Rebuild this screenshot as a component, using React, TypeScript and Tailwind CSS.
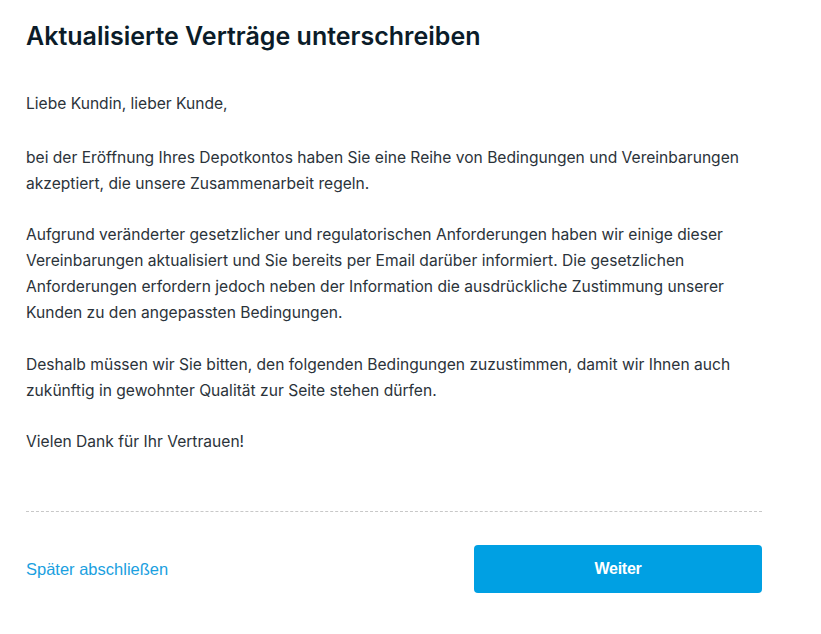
export default function App() {
  return (
    <div className="min-h-screen bg-white font-['Inter',sans-serif]">
      <div className="w-[736px] ml-[26px] pt-[20px]">
        <h1 className="text-[25px] leading-[32px] font-semibold text-[#0b1c29]">Aktualisierte Verträge unterschreiben</h1>
        <div className="mt-[39px] text-[15.6px] leading-[26px] text-[#2b333a]">
          <p>Liebe Kundin, lieber Kunde,</p>
          <p className="mt-[28px]">bei der Eröffnung Ihres Depotkontos haben Sie eine Reihe von Bedingungen und Vereinbarungen akzeptiert, die unsere Zusammenarbeit regeln.</p>
          <p className="mt-[25px]">Aufgrund veränderter gesetzlicher und regulatorischen Anforderungen haben wir einige dieser Vereinbarungen aktualisiert und Sie bereits per Email darüber informiert. Die gesetzlichen Anforderungen erfordern jedoch neben der Information die ausdrückliche Zustimmung unserer Kunden zu den angepassten Bedingungen.</p>
          <p className="mt-[26px]">Deshalb müssen wir Sie bitten, den folgenden Bedingungen zuzustimmen, damit wir Ihnen auch zukünftig in gewohnter Qualität zur Seite stehen dürfen.</p>
          <p className="mt-[25px]">Vielen Dank für Ihr Vertrauen!</p>
        </div>
        <div className="mt-[56px] border-t border-dashed border-[#c8c8c8]" />
        <div className="mt-[33px] flex items-center justify-between font-['Liberation_Sans',sans-serif]">
          <button className="text-[16.5px] text-[#1aa0e0]">Später abschließen</button>
          <button className="w-[288px] h-[48px] rounded-[4px] bg-[#00a0e3] text-white text-[16px] font-semibold tracking-[-0.3px]">Weiter</button>
        </div>
      </div>
    </div>
  );
}
